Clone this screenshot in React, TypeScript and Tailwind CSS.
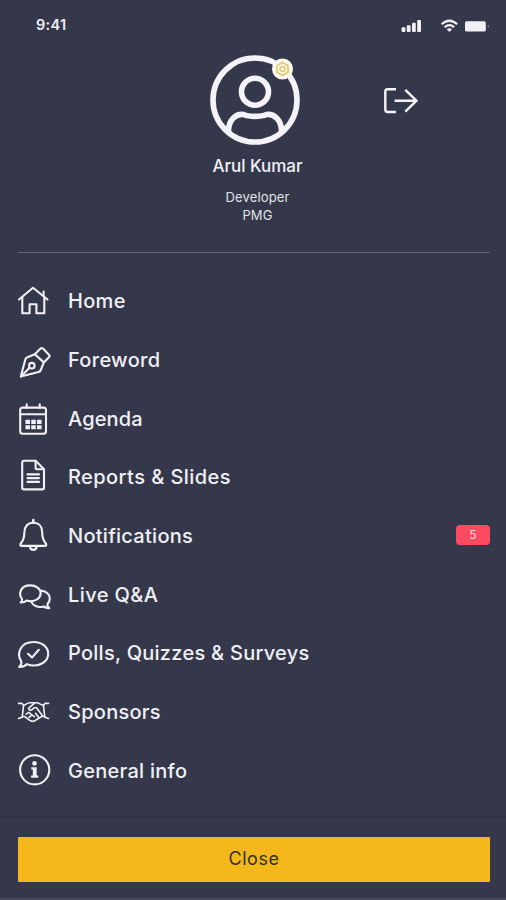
import type { ReactNode } from "react";

type Item = { label: string; tracking: string; icon: ReactNode; badge?: number };

const ITEMS: Item[] = [
  {
    label: "Home",
    tracking: "tracking-[0.3px]",
    icon: (
      <>
        <path d="M3 16.5 17 4.8 31.5 16.5" />
        <path d="M6.3 14.5V30.3H13.6V21.3H20.4V30.3H28.3V14.5" />
        <path d="M27.6 8.5V13" />
      </>
    ),
  },
  {
    label: "Foreword",
    tracking: "tracking-[0.3px]",
    icon: (
      <>
        <path d="M4.8 34.6 9.3 17.5Q9.8 15.8 11.5 15.3L18.8 12.2 27.8 20.4 24.8 28Q24.2 29.5 22.5 30Z" />
        <path d="M18.8 12.2 24.6 6.6Q25.8 5.5 27 6.6L33.2 12.9Q34.2 14 33.2 15.1L27.8 20.4" />
        <circle cx="15.8" cy="23.7" r="2.8" />
        <path d="M5 34.4 13.6 25.8" />
      </>
    ),
  },
  {
    label: "Agenda",
    tracking: "tracking-[0.15px]",
    icon: (
      <>
        <rect x="4.2" y="6.6" width="25.8" height="26.2" rx="2.5" />
        <path d="M4.2 13.2H30M10.7 3.4V7M23.7 3.4V7" />
        <path
          d="M9.4 18.8h4.6v4.1H9.4zM15.2 18.8h4.6v4.1h-4.6zM21 18.8h4.6v4.1H21zM9.4 24.2h4.6v4.1H9.4zM15.2 24.2h4.6v4.1h-4.6zM21 24.2h4.6v4.1H21z"
          fill="currentColor"
          stroke="none"
        />
      </>
    ),
  },
  {
    label: "Reports & Slides",
    tracking: "tracking-[0.43px]",
    icon: (
      <>
        <path d="M19.6 1.8H8Q6.2 1.8 6.2 3.6V28.7Q6.2 30.4 8 30.4H26.2Q28 30.4 28 28.7V10.2Z" />
        <path d="M19.6 1.8V8.4Q19.6 10.2 21.4 10.2H28" />
        <path d="M11.5 15.4H23M11.5 19.1H23M11.5 22.9H23" />
      </>
    ),
  },
  {
    label: "Notifications",
    tracking: "tracking-[0.27px]",
    badge: 5,
    icon: (
      <>
        <path d="M17.3 2V4.6" strokeWidth="2.6" />
        <path d="M17.3 4.8C11.5 4.8 8.4 8.8 8.4 14.2C8.4 20.5 7.4 22.5 4.8 25.3Q3.5 27.9 5.8 27.9H28.8Q31.1 27.9 29.8 25.3C27.2 22.5 26.2 20.5 26.2 14.2C26.2 8.8 23.1 4.8 17.3 4.8Z" />
        <path d="M13.8 28.5C14.4 33 20.2 33 20.8 28.5" />
      </>
    ),
  },
  {
    label: "Live Q&A",
    tracking: "tracking-[0.4px]",
    icon: (
      <>
        <path d="M4.7 25.5C6 24.5 6.3 23.5 6 22C2.5 17.5 3.8 8.4 14.2 8.4C20 8.4 24.6 11.5 24.6 16.2C24.6 21 20 24.2 14.6 24.2Q12.5 24.2 10.8 23.5Q8.5 25.6 4.7 25.5Z" />
        <path d="M24.4 13.6C30 13.8 33.8 17.3 33.8 21.5Q33.8 24.8 31.5 27C31.2 28.8 32 30.2 33.4 31.1Q29.8 31.4 27.6 29.4C22.5 30.9 17.2 29.4 15 24.4" />
      </>
    ),
  },
  {
    label: "Polls, Quizzes & Surveys",
    tracking: "tracking-[0.26px]",
    icon: (
      <>
        <path d="M3.2 32C5.2 30.2 5.8 28.6 5.3 26.2C0.2 19 4 7 17.7 7C26 7 32.2 12 32.2 18.7C32.2 25.5 26 30.5 17.7 30.5Q13.8 30.5 11 29.1Q8 32.2 3.2 32Z" />
        <path d="M12 18.8 16 22.6 22.8 14.8" />
      </>
    ),
  },
  {
    label: "Sponsors",
    tracking: "tracking-[0.27px]",
    icon: (
      <g strokeWidth="1.6">
        <path d="M2.5 9.4H6L7.6 11.3 6.2 23.2 2.5 24.4M32.5 9.4H29L27.4 11.3 28.8 23.2 32.5 24.4" />
        <path d="M7.4 11.3C9.5 11.2 11 8.8 14 8.7H20.5C23.5 8.7 25 11.2 27.6 11.3" />
        <path d="M6.3 22.5H8.5L14.5 26.8Q17.2 28.2 19.8 26.2L25.6 22.5H28.7" />
        <path d="M18.5 9.2 12.7 14.2C12.4 17 16.3 16.7 18.1 13.7L20.5 13.8 26.3 21.5M10.2 20.1 12.8 18.3 15.5 20.5M13 23.3 16 20.8 18.5 22.7M19.6 19.3 22.7 23.4" />
      </g>
    ),
  },
  {
    label: "General info",
    tracking: "tracking-[0.27px]",
    icon: (
      <>
        <circle cx="18.7" cy="16.8" r="14.6" />
        <circle cx="18.5" cy="10.4" r="2.3" fill="currentColor" stroke="none" />
        <path d="M15.3 14.3H20.7V22.6H22.3V24.7H15.1V22.6H16.8V16.4H15.3Z" fill="currentColor" stroke="none" />
      </>
    ),
  },
];

function StatusBar() {
  return (
    <header className="flex h-[50px] items-center justify-between pl-9 pr-[15px]">
      <span className="text-[14.5px] font-semibold leading-none tracking-[0.3px]">9:41</span>
      <svg width="92" height="20" viewBox="0 0 92 20" className="mt-0.5" fill="currentColor">
        <rect x="2.6" y="11.2" width="3.8" height="4.8" rx="1" />
        <rect x="7.8" y="9.2" width="3.8" height="6.8" rx="1" />
        <rect x="13" y="6.8" width="3.8" height="9.2" rx="1" />
        <rect x="18.2" y="4" width="3.8" height="12" rx="1" />
        <g fill="none" stroke="currentColor" strokeWidth="2.2">
          <path d="M42.6 8.3Q50.4 1.2 58.2 8.3" />
          <path d="M45.6 11.3Q50.4 7 55.2 11.3" />
        </g>
        <path d="M47.7 13.2Q50.4 11.2 53.1 13.2L50.4 16Z" />
        <rect x="66" y="5.2" width="20.8" height="10.4" rx="1.5" />
        <path d="M88.8 8.5Q91 10.3 88.8 12.2Z" opacity=".5" />
      </svg>
    </header>
  );
}

function Profile() {
  return (
    <section className="ml-[18px] mr-4 grid h-[203px] grid-cols-[1fr_140px_1fr] border-b border-[#626473]">
      <div />
      <div className="flex flex-col items-center pl-[7px] pt-1">
        <svg width="94" height="94" viewBox="0 0 94 94" className="-ml-[5px] shrink-0" fill="none" stroke="#f3f3f8" strokeWidth="5.6">
          <circle cx="47" cy="46" r="42" />
          <circle cx="47" cy="37.8" r="13.5" />
          <path d="M20.5 78V76C21 65.5 28 59.5 35.5 60.5C41 63 53 63 58.5 60.5C66 59.5 73 65.5 73.5 76V78" />
          <circle cx="74.5" cy="15" r="10.5" fill="#fbf9f2" stroke="none" />
          <path d="M74.5 8.5 80 11.8V18.2L74.5 21.5 69 18.2V11.8Z" stroke="#e6ca6c" strokeWidth="1.8" strokeLinejoin="round" />
          <circle cx="74.5" cy="15" r="2.5" stroke="#e6ca6c" strokeWidth="1.5" />
        </svg>
        <h1 className="mt-[8px] whitespace-nowrap text-[17px] font-medium leading-5 tracking-[-0.05px]">Arul Kumar</h1>
        <p className="mt-[12px] text-center text-[13px] leading-[18px] tracking-[0.15px] text-[#e2e2ea]">
          Developer
          <br />
          PMG
        </p>
      </div>
      <button aria-label="Log out" className="ml-[59px] mt-[36px] h-[30px] w-[36px]">
        <svg width="36" height="30" viewBox="0 0 36 30" fill="none" stroke="#f3f3f8" strokeWidth="2.4">
          <path d="M13 3.2H4.5Q2.3 3.2 2.3 5.5V23.5Q2.3 26 4.5 26H13" />
          <path d="M11.5 14.7H33M22.3 3.8 33.5 14.7 22.3 25.7" />
        </svg>
      </button>
    </section>
  );
}

export default function App() {
  return (
    <main className="flex h-[900px] w-[506px] flex-col overflow-hidden bg-[#35384a] font-[Inter,sans-serif] text-[#f0f0f6]">
      <StatusBar />
      <Profile />
      <nav className="flex h-[563px] flex-col pt-[19px]">
        {ITEMS.map((item) => (
          <a key={item.label} className="flex h-[58.7px] shrink-0 items-center pl-4 pr-4">
            <svg
              width="36"
              height="36"
              viewBox="0 0 36 36"
              className="mr-4 shrink-0 overflow-visible"
              fill="none"
              stroke="currentColor"
              strokeWidth="2.1"
              strokeLinecap="round"
              strokeLinejoin="round"
            >
              {item.icon}
            </svg>
            <span className={`whitespace-nowrap text-[20px] font-medium leading-6 ${item.tracking}`}>{item.label}</span>
            {item.badge && (
              <span className="mb-0.5 ml-auto flex h-5 w-[34px] items-center justify-center rounded-[4px] bg-[#fc4a60] text-[12px] text-[#ffd9df]">
                {item.badge}
              </span>
            )}
          </a>
        ))}
      </nav>
      <footer className="h-[84px] border-y-2 border-b-[#45485a] border-t-[#303243] pl-[18px] pr-4 pt-[19px]">
        <button className="h-[45px] w-full rounded-[1px] bg-[#f5b81c] pb-[3px] text-[18px] tracking-[0.5px] text-[#33301f]">Close</button>
      </footer>
    </main>
  );
}
